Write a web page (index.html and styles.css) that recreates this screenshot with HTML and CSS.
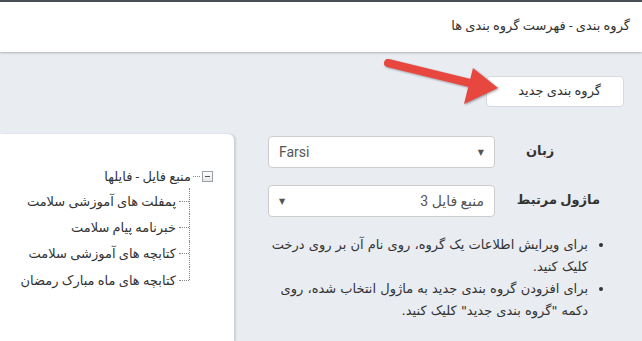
FILE: index.html
```html
<!DOCTYPE html>
<html lang="fa" dir="rtl">
  <head>
    <meta charset="UTF-8" />
    <meta name="viewport" content="width=device-width, initial-scale=1.0"/>
    <title>گروه بندی</title>
    <link rel="stylesheet" href="styles.css">
  </head>
  <body>
    <div class="topline"></div>
    <header>
      <h1>گروه بندی - فهرست گروه بندی ها</h1>
    </header>

    <div class="page">
      <div class="main">
        <div class="toolbar">
          <button class="btn">گروه بندی جدید</button>
        </div>

        <div class="form-row first">
          <label>زبان</label>
          <div class="select ltr">
            <span class="value">Farsi</span>
            <span class="caret">&#9660;</span>
          </div>
        </div>
        <div class="form-row">
          <label>ماژول مرتبط</label>
          <div class="select">
            <span class="value">منبع فایل 3</span>
            <span class="caret">&#9660;</span>
          </div>
        </div>

        <ul class="help">
          <li>برای ویرایش اطلاعات یک گروه، روی نام آن بر روی درخت کلیک کنید.</li>
          <li>برای افزودن گروه بندی جدید به ماژول انتخاب شده، روی دکمه "گروه بندی جدید" کلیک کنید.</li>
        </ul>
      </div>

      <div class="tree-panel">
        <div class="tree-root">
          <span class="expander"></span>
          <span class="dots"></span>
          <span>منبع فایل - فایلها</span>
        </div>
        <ul class="tree-children">
          <li><span class="dots"></span>پمفلت های آموزشی سلامت</li>
          <li><span class="dots"></span>خبرنامه پیام سلامت</li>
          <li><span class="dots"></span>کتابچه های آموزشی سلامت</li>
          <li><span class="dots"></span>کتابچه های ماه مبارک رمضان</li>
        </ul>
      </div>
    </div>

    <!-- red pointer drawn over the page -->
    <svg class="pointer" width="140" height="70" viewBox="0 0 140 70">
      <line x1="8" y1="9" x2="98" y2="31" stroke="#e8473f" stroke-width="8" stroke-linecap="round"/>
      <polygon points="118,34 93,14 84,50" fill="#e8473f"/>
    </svg>
  </body>
</html>
```

FILE: styles.css
```css
body {
  margin: 0;
  padding: 0;
  font-family: Roboto, "DejaVu Sans", sans-serif;
  font-size: 13px;
  color: #333;
  background-color: #e9ecf1;
  height: 341px;
  overflow: hidden;
}

.topline {
  height: 2px;
  background-color: #4b4f58;
}

header {
  background-color: white;
  height: 50px;
  padding: 0 12px;
  display: flex;
  align-items: center;
  box-shadow: 0 1px 2px rgba(0,0,0,0.25);
  position: relative;
  z-index: 1;
}
h1 {
  margin: 0 0 4px 0;
  font-size: 13px;
  font-weight: normal;
}

.page {
  display: flex;
  align-items: stretch;
  height: 289px;
}

.main {
  width: 408px;
  flex: none;
}

.toolbar {
  display: flex;
  padding: 24px 18px 0 0;
}
.btn {
  font-family: inherit;
  font-size: 13px;
  color: #333;
  background-color: white;
  border: 1px solid #d6d9de;
  border-radius: 4px;
  width: 138px;
  height: 31px;
  padding: 0 22px 3px 0;
  text-align: right;
}

.form-row {
  display: flex;
  align-items: center;
  margin-right: 42px;
  margin-bottom: 17px;
}
.form-row.first {
  margin-top: 29px;
}
.form-row label {
  width: 74px;
  text-align: left;
  font-weight: bold;
  margin-left: 31px;
  padding-bottom: 3px;
  white-space: nowrap;
}

.select {
  width: 205px;
  height: 30px;
  background-color: white;
  border: 1px solid #ccc;
  border-radius: 4px;
  display: flex;
  align-items: center;
  justify-content: space-between;
  padding: 0 10px;
  box-sizing: content-box;
}
.select.ltr {
  direction: ltr;
}
.select .value {
  font-size: 14px;
  color: #555;
}
.select .caret {
  font-size: 8px;
  color: #555;
}

.help {
  margin: 15px 0 0 0;
  padding: 0 54px 0 32px;
  font-family: "DejaVu Sans", sans-serif;
  line-height: 22px;
  font-size: 13px;
}

.tree-panel {
  flex: 1;
  margin-top: 82px;
  background-color: white;
  border-top-right-radius: 6px;
  box-shadow: 2px 0 2px rgba(0,0,0,0.12);
  padding: 34px 21px 0 0;
  box-sizing: border-box;
}

.tree-root {
  display: flex;
  align-items: center;
  height: 16px;
}
.expander {
  width: 9px;
  height: 9px;
  border: 1px solid #9aa0a8;
  background: linear-gradient(#fff, #e6e6e6);
  position: relative;
}
.expander::after {
  content: "";
  position: absolute;
  left: 2px;
  right: 2px;
  top: 4px;
  height: 1px;
  background-color: #555;
}
.dots {
  width: 7px;
  border-top: 1px dotted #888;
  margin: 0 2px;
}

.tree-children {
  list-style: none;
  margin: 4px 24px 0 0;
  padding: 0;
  width: max-content;
}
.tree-children li {
  display: flex;
  align-items: center;
  height: 26.3px;
  position: relative;
}
/* vertical connector, stops at the middle of the last node */
.tree-children li::before {
  content: "";
  position: absolute;
  right: -1px;
  top: 0;
  bottom: 0;
  border-right: 1px dotted #888;
}
.tree-children li:last-child::before {
  bottom: 50%;
}
.tree-children li .dots {
  width: 10px;
  margin: 0 0 0 3px;
}

.pointer {
  position: absolute;
  left: 380px;
  top: 54px;
  filter: drop-shadow(1px 1px 1px rgba(0,0,0,0.35));
}
```
